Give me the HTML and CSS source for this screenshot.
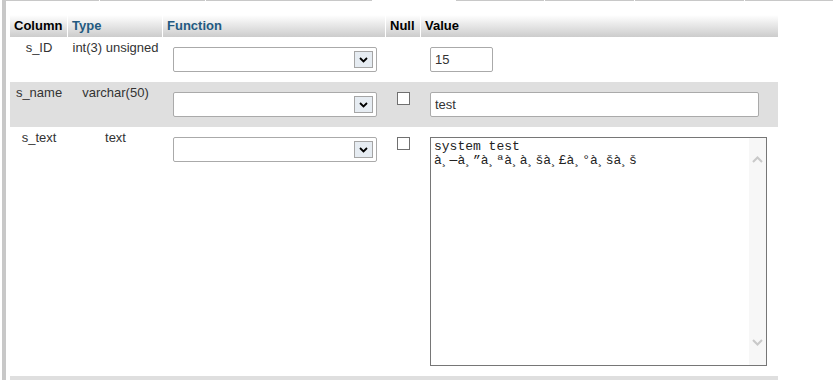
FILE: index.html
```html
<!DOCTYPE html>
<html lang="en">
  <head>
    <title>Insert row</title>
    <meta charset="UTF-8">
    <link rel="stylesheet" href="styles.css">
  </head>
  <body>
    <div class="page">
      <!-- bottom edge of the table above, cut off by the screenshot -->
      <div class="tab-edge">
        <span class="seg seg-1"></span>
        <span class="seg seg-2"></span>
        <span class="seg seg-3"></span>
        <span class="gap"></span>
        <span class="seg seg-4"></span>
        <span class="seg seg-5"></span>
        <span class="seg seg-6"></span>
        <span class="seg seg-7"></span>
      </div>

      <form action="" method="post">
        <table class="insert">
          <thead>
            <tr>
              <th class="col-name">Column</th>
              <th class="col-type"><a href="">Type</a></th>
              <th class="col-fn"><a href="">Function</a></th>
              <th class="col-null">Null</th>
              <th class="col-val">Value</th>
            </tr>
          </thead>
          <tbody>
            <tr class="odd">
              <td class="name">s_ID</td>
              <td class="type">int(3) unsigned</td>
              <td class="fn">
                <div class="fn-select">
                  <select name="funcs[s_ID]"><option value=""></option></select>
                  <span class="fn-arrow"><svg width="9" height="6" viewBox="0 0 9 6"><path d="M1 1 L4.5 4.5 L8 1" fill="none" stroke="#000" stroke-width="1.8"/></svg></span>
                </div>
              </td>
              <td class="null"></td>
              <td class="val"><input class="field field-short" type="text" name="fields[s_ID]" value="15"></td>
            </tr>
            <tr class="even">
              <td class="name">s_name</td>
              <td class="type">varchar(50)</td>
              <td class="fn">
                <div class="fn-select">
                  <select name="funcs[s_name]"><option value=""></option></select>
                  <span class="fn-arrow"><svg width="9" height="6" viewBox="0 0 9 6"><path d="M1 1 L4.5 4.5 L8 1" fill="none" stroke="#000" stroke-width="1.8"/></svg></span>
                </div>
              </td>
              <td class="null"><input class="check" type="checkbox" name="null[s_name]"></td>
              <td class="val"><input class="field field-long" type="text" name="fields[s_name]" value="test"></td>
            </tr>
            <tr class="odd">
              <td class="name">s_text</td>
              <td class="type">text</td>
              <td class="fn">
                <div class="fn-select">
                  <select name="funcs[s_text]"><option value=""></option></select>
                  <span class="fn-arrow"><svg width="9" height="6" viewBox="0 0 9 6"><path d="M1 1 L4.5 4.5 L8 1" fill="none" stroke="#000" stroke-width="1.8"/></svg></span>
                </div>
              </td>
              <td class="null"><input class="check" type="checkbox" name="null[s_text]"></td>
              <td class="val">
                <div class="text-box">
                  <textarea name="fields[s_text]">system test
à¸—à¸”à¸ªà¸&shy;à¸šà¸£à¸°à¸šà¸š</textarea>
                  <div class="scroll">
                    <svg width="11" height="7" viewBox="0 0 11 7"><path d="M1 6 L5.5 1.5 L10 6" fill="none" stroke="#c9c9c9" stroke-width="2"/></svg>
                    <svg width="11" height="7" viewBox="0 0 11 7"><path d="M1 1 L5.5 5.5 L10 1" fill="none" stroke="#c9c9c9" stroke-width="2"/></svg>
                  </div>
                </div>
              </td>
            </tr>
            <tr class="even filler">
              <td></td><td></td><td></td><td></td><td></td>
            </tr>
          </tbody>
        </table>
      </form>
    </div>
  </body>
</html>
```

FILE: styles.css
```css
/* General styles */

html {
  font-family: "Liberation Sans", Arial, sans-serif;
  font-size: 13px;
}

body {
  margin: 0;
  color: #333;
  overflow: hidden;
}

.page {
  margin-left: 2px;
  height: 380px;
  border-left: 4px solid #c8c8c8;
  overflow: hidden;
}

/* Cut off edge of the previous table */

.tab-edge {
  display: flex;
  height: 1px;
}

.tab-edge .seg {
  height: 1px;
  margin-right: 1px;
  background-color: #c8c8c8;
}

.tab-edge .seg-1 { width: 93px; }
.tab-edge .seg-2 { width: 105px; }
.tab-edge .seg-3 { width: 166px; margin-right: 0; }
.tab-edge .gap { width: 84px; }
.tab-edge .seg-4 { width: 88px; }
.tab-edge .seg-5 { width: 89px; }
.tab-edge .seg-6 { width: 109px; }
.tab-edge .seg-7 { flex: 1; margin-right: 0; }

/* Insert table */

table.insert {
  margin: 14px 0 0 4px;
  width: 768px;
  table-layout: fixed;
  border-collapse: separate;
  border-spacing: 0;
}

table.insert th {
  box-sizing: border-box;
  height: 22px;
  padding: 0 4px 2px 4px;
  border-right: 1px solid #fff;
  background: linear-gradient(#fff, #ccc);
  color: #000;
  font-weight: bold;
  text-align: left;
  white-space: nowrap;
}

table.insert th a {
  color: #235a81;
  text-decoration: none;
}

table.insert th.col-name { width: 58px; }
table.insert th.col-type { width: 95px; }
table.insert th.col-fn { width: 223px; }
table.insert th.col-null { width: 35px; }
table.insert th.col-val { width: 357px; border-right: 0; }

table.insert td {
  padding: 3px 0;
  vertical-align: top;
  line-height: 15px;
  white-space: nowrap;
}

table.insert tr.odd td {
  background-color: #fff;
}

table.insert tr.even td {
  background-color: #dfdfdf;
}

table.insert tr.filler td {
  height: 4px;
  padding: 0;
}

table.insert td.name,
table.insert td.type {
  text-align: center;
}

table.insert td.fn {
  padding-left: 10px;
}

table.insert td.val {
  padding-left: 9px;
}

/* Function select with old style arrow button */

.fn-select {
  position: relative;
  width: 204px;
  height: 25px;
  margin: 7px 0;
}

.fn-select select {
  display: block;
  box-sizing: border-box;
  width: 100%;
  height: 25px;
  border: 1px solid #aaa;
  border-radius: 2px;
  background-color: #fff;
  -webkit-appearance: none;
  appearance: none;
}

.fn-arrow {
  position: absolute;
  top: 4px;
  right: 4px;
  display: flex;
  align-items: center;
  justify-content: center;
  box-sizing: border-box;
  width: 19px;
  height: 17px;
  border: 1px solid #a5a5a5;
  background-color: #e6ecf2;
  pointer-events: none;
}

/* Null checkbox */

.check {
  display: block;
  box-sizing: border-box;
  width: 13px;
  height: 13px;
  margin: 7px auto 0 auto;
  border: 1px solid #707070;
  background-color: #fff;
  -webkit-appearance: none;
  appearance: none;
}

/* Value fields */

.field {
  display: block;
  box-sizing: border-box;
  height: 25px;
  margin: 7px 0;
  padding: 0 4px;
  border: 1px solid #aaa;
  border-radius: 2px;
  color: #333;
  font-family: "Liberation Sans", Arial, sans-serif;
  font-size: 13px;
}

.field-short {
  width: 63px;
}

.field-long {
  width: 329px;
}

.text-box {
  display: flex;
  box-sizing: border-box;
  width: 337px;
  height: 229px;
  margin: 7px 0;
  border: 1px solid #767676;
  background-color: #fff;
}

.text-box textarea {
  flex: 1;
  margin: 0;
  padding: 2px 3px;
  border: 0;
  outline: none;
  resize: none;
  overflow: hidden;
  color: #222;
  font-family: "Liberation Mono", "Courier New", monospace;
  font-size: 13px;
  line-height: 14px;
}

.text-box .scroll {
  display: flex;
  flex-direction: column;
  justify-content: space-between;
  align-items: center;
  width: 17px;
  padding: 18px 0 19px 0;
  background-color: #f7f7f7;
}
```
